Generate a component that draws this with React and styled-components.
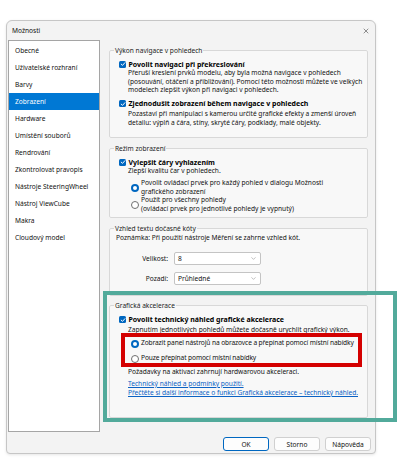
import React from 'react'
import styled, { createGlobalStyle } from 'styled-components'
import { X, ChevronDown } from 'lucide-react'

const GlobalStyle = createGlobalStyle`
  html, body {
    margin: 0;
    padding: 0;
    background: #fff;
  }
  body {
    font-family: "Noto Sans", "Open Sans", sans-serif;
    color: #111;
  }
`

const FS = '6.6px'

const Stage = styled.div`
  width: 400px;
  height: 466px;
  box-sizing: border-box;
  padding: 20px 0 0 6px;
  overflow: hidden;
`

const Dialog = styled.div`
  width: 370px;
  height: 434px;
  box-sizing: border-box;
  border: 1px solid #c6c6c6;
  border-radius: 6px 6px 4px 4px;
  background: #f3f3f3;
  display: flex;
  flex-direction: column;
  box-shadow: 0 1px 3px rgba(0, 0, 0, 0.1);
`

const TitleBar = styled.div`
  height: 19px;
  display: flex;
  align-items: center;
  justify-content: space-between;
  padding: 0 5px 0 5px;
  font-size: ${FS};
  color: #111;
`

const Body = styled.div`
  display: flex;
  height: 392px;
  padding-left: 1px;
`

const Sidebar = styled.ul`
  list-style: none;
  margin: 0;
  padding: 1px 0 0;
  width: 92px;
  height: 392px;
  box-sizing: border-box;
  border: 1px solid #a5a5a5;
  background: #fff;
`

const NavItem = styled.li`
  height: 17px;
  display: flex;
  align-items: center;
  padding-left: 6px;
  font-size: ${FS};
  white-space: nowrap;
  background: ${p => (p.$active ? '#0078d4' : 'transparent')};
  color: ${p => (p.$active ? '#fff' : '#111')};
`

const Content = styled.div`
  flex: 1;
  padding: 0 7px 0 9px;
  display: flex;
  flex-direction: column;
`

const Group = styled.fieldset`
  margin: ${p => p.$mt ?? 5.5}px 0 0;
  padding: 0 0 ${p => p.$pb || 0}px;
  border: 1px solid #d8d8d8;
  border-radius: 2px;
  background: #f8f8f8;
  min-width: 0;
`

const Legend = styled.legend`
  margin-left: 4px;
  padding: 0 1px;
  font-size: ${FS};
  line-height: 9px;
  color: #222;
`

const CheckRow = styled.div`
  display: flex;
  align-items: center;
  gap: 2.5px;
  height: 10px;
  padding-left: 9px;
  margin-top: ${p => p.$mt || 0}px;
  font-size: 7px;
  font-weight: 700;
  white-space: nowrap;
  color: #000;
`

const Box = styled.span`
  width: 7px;
  height: 7px;
  border-radius: 1.5px;
  background: #0067c0;
  display: inline-flex;
  align-items: center;
  justify-content: center;
  flex: none;
`

const Desc = styled.div`
  padding-left: ${p => p.$pl ?? 18}px;
  margin-top: ${p => p.$mt || 0}px;
  font-size: ${FS};
  line-height: 8.5px;
  white-space: nowrap;
  color: #111;
`

const RadioRow = styled.div`
  display: flex;
  align-items: center;
  gap: 2px;
  padding-left: 21px;
  height: ${p => (p.$h ? `${p.$h}px` : 'auto')};
  font-size: ${FS};
  line-height: 8.5px;
  letter-spacing: ${p => (p.$tight ? '-0.1px' : 'normal')};
  white-space: nowrap;
  color: #111;
`

const Radio = styled.span`
  width: 8px;
  height: 8px;
  box-sizing: border-box;
  border-radius: 50%;
  flex: none;
  background: #fff;
  border: ${p => (p.$checked ? '2.5px solid #0067c0' : '1px solid #6f6f6f')};
`

const RadioList = styled.div`
  margin-top: ${p => p.$mt || 0}px;
  position: relative;
`

const FieldRow = styled.div`
  display: flex;
  align-items: center;
  gap: 6px;
  height: 13px;
  margin-top: ${p => p.$mt || 0}px;
  font-size: ${FS};
`

const FieldLabel = styled.span`
  width: 58px;
  text-align: right;
  color: #111;
`

const Select = styled.div`
  width: 87px;
  height: 13px;
  box-sizing: border-box;
  border: 1px solid #c4c4c4;
  border-radius: 2px;
  background: #fff;
  display: flex;
  align-items: center;
  justify-content: space-between;
  padding: 0 3px;
  color: #111;
`

const Link = styled.a`
  display: block;
  padding-left: 18px;
  margin-top: ${p => p.$mt || 0}px;
  font-size: ${FS};
  line-height: 9px;
  color: #0b62c4;
  text-decoration: underline;
  white-space: nowrap;
`

const Highlight = styled.div`
  position: relative;
`

const Frame = styled.div`
  position: absolute;
  pointer-events: none;
  border: 4px solid ${p => p.$color};
  z-index: 5;
`

const Footer = styled.div`
  flex: 1;
  display: flex;
  justify-content: flex-end;
  align-items: flex-start;
  gap: 5px;
  padding: 5px 4px 0 0;
`

const Button = styled.button`
  width: 46px;
  height: 14px;
  box-sizing: border-box;
  padding: 0;
  border: 1px solid ${p => (p.$primary ? '#0067c0' : '#d0d0d0')};
  border-radius: 3px;
  background: #fdfdfd;
  font-family: inherit;
  font-size: ${FS};
  color: #111;
`

const Check = () => (
  <Box>
    <svg width="6" height="6" viewBox="0 0 10 10">
      <path d="M2 5.2 L4.2 7.3 L8.2 2.8" fill="none" stroke="#fff" strokeWidth="1.6" strokeLinecap="round" strokeLinejoin="round" />
    </svg>
  </Box>
)

const navItems = [
  'Obecné',
  'Uživatelské rozhraní',
  'Barvy',
  'Zobrazení',
  'Hardware',
  'Umístění souborů',
  'Rendrování',
  'Zkontrolovat pravopis',
  'Nástroje SteeringWheel',
  'Nástroj ViewCube',
  'Makra',
  'Cloudový model',
]

const App = () => {
  return (
    <Stage>
      <GlobalStyle />
      <Dialog>
        <TitleBar>
          <span>Možnosti</span>
          <X size={8} strokeWidth={1.6} color="#333" />
        </TitleBar>
        <Body>
          <Sidebar>
            {navItems.map(item => (
              <NavItem key={item} $active={item === 'Zobrazení'}>{item}</NavItem>
            ))}
          </Sidebar>
          <Content>
            <Group $pb={10}>
              <Legend>Výkon navigace v pohledech</Legend>
              <CheckRow $mt={4.5}><Check />Povolit navigaci při překreslování</CheckRow>
              <Desc>
                Přeruší kreslení prvků modelu, aby byla možná navigace v pohledech<br />
                (posouvání, otáčení a přibližování). Pomocí této možnosti můžete ve velkých<br />
                modelech zlepšit výkon při navigaci v pohledech.
              </Desc>
              <CheckRow $mt={4}><Check />Zjednodušit zobrazení během navigace v pohledech</CheckRow>
              <Desc $mt={1.5}>
                Pozastaví při manipulaci s kamerou určité grafické efekty a zmenší úroveň<br />
                detailu: výplň a čára, stíny, skryté čáry, podklady, malé objekty.
              </Desc>
            </Group>

            <Group $pb={4}>
              <Legend>Režim zobrazení</Legend>
              <CheckRow $mt={4.5}><Check />Vylepšit čáry vyhlazením</CheckRow>
              <Desc>Zlepší kvalitu čar v pohledech.</Desc>
              <RadioList $mt={3.5}>
                <RadioRow>
                  <Radio $checked />
                  <span>Povolit ovládací prvek pro každý pohled v dialogu Možnosti<br />grafického zobrazení</span>
                </RadioRow>
                <RadioRow>
                  <Radio />
                  <span>Použít pro všechny pohledy<br />(ovládací prvek pro jednotlivé pohledy je vypnutý)</span>
                </RadioRow>
              </RadioList>
            </Group>

            <Group $pb={10}>
              <Legend>Vzhled textu dočasné kóty</Legend>
              <Desc $pl={6} $mt={1}>Poznámka: Při použití nástroje Měření se zahrne vzhled kót.</Desc>
              <FieldRow $mt={10}>
                <FieldLabel>Velikost:</FieldLabel>
                <Select>8<ChevronDown size={7} strokeWidth={1.4} color="#666" /></Select>
              </FieldRow>
              <FieldRow $mt={7}>
                <FieldLabel>Pozadí:</FieldLabel>
                <Select>Průhledné<ChevronDown size={7} strokeWidth={1.4} color="#666" /></Select>
              </FieldRow>
            </Group>

            <Highlight>
              <Frame $color="#52aa9b" style={{ left: -6, right: -29, top: -5.5, bottom: -4.5 }} />
              <Group $pb={20} $mt={5}>
                <Legend>Grafická akcelerace</Legend>
                <CheckRow $mt={4.5}><Check />Povolit technický náhled grafické akcelerace</CheckRow>
                <Desc $mt={1.5}>Zapnutím jednotlivých pohledů můžete dočasně urychlit grafický výkon.</Desc>
                <RadioList $mt={1.5}>
                  <Frame $color="#d40000" style={{ left: 11, right: 5, top: -3, bottom: -1 }} />
                  <RadioRow $h={15} $tight>
                    <Radio $checked />
                    <span>Zobrazit panel nástrojů na obrazovce a přepínat pomocí místní nabídky</span>
                  </RadioRow>
                  <RadioRow $h={15} $tight>
                    <Radio />
                    <span>Pouze přepínat pomocí místní nabídky</span>
                  </RadioRow>
                </RadioList>
                <Desc $mt={2}>Požadavky na aktivaci zahrnují hardwarovou akceleraci.</Desc>
                <Link $mt={2}>Technický náhled a podmínky použití.</Link>
                <Link>Přečtěte si další informace o funkci Grafická akcelerace – technický náhled.</Link>
              </Group>
            </Highlight>
          </Content>
        </Body>
        <Footer>
          <Button $primary>OK</Button>
          <Button>Storno</Button>
          <Button>Nápověda</Button>
        </Footer>
      </Dialog>
    </Stage>
  )
}

export default App
